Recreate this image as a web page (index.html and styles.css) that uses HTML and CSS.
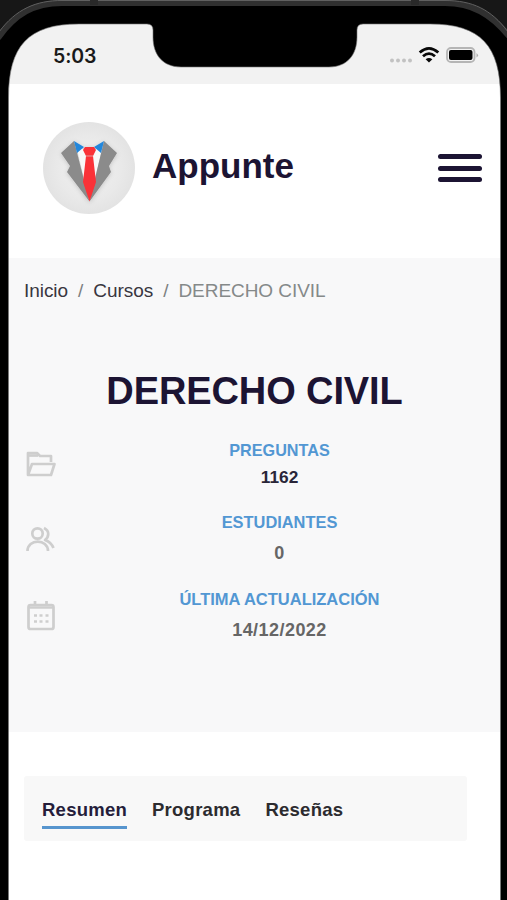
FILE: index.html
```html
<!DOCTYPE html>
<html lang="es">
<head>
<meta charset="utf-8">
<title>Derecho Civil</title>
<link rel="stylesheet" href="styles.css">
</head>
<body>
<div class="phone">
  <main class="screen">
    <div class="status">
      <span class="time">5:03</span>
      <svg class="signals" viewBox="0 0 90 20" width="90" height="20">
        <g fill="#c2c2c2"><circle cx="3" cy="14.500" r="2"/><circle cx="9" cy="14.500" r="2"/><circle cx="15" cy="14.500" r="2"/><circle cx="21" cy="14.500" r="2"/></g>
        <g fill="none" stroke="#080808" stroke-width="2.800"><path d="M30.700 6.500Q40 -1.800 49.300 6.500"/><path d="M34 10.300Q40 4.900 46 10.300"/></g>
        <path d="M36.600 13.300Q40 10.500 43.400 13.300L40 16.500Z" fill="#080808"/>
        <rect x="58" y="2" width="27.500" height="14" rx="4" fill="#f2f2f2" stroke="#b5b5b5" stroke-width="1.800"/>
        <rect x="60" y="4" width="23.500" height="10" rx="2" fill="#000"/>
        <path d="M87.500 7q3 2.300 0 4.600z" fill="#adadad"/>
      </svg>
    </div>
    <header class="header">
      <svg class="logo" viewBox="0 0 92 92" width="92" height="92">
        <defs>
          <radialGradient id="disc"><stop offset="0" stop-color="#f2f2f2"/><stop offset=".7" stop-color="#e9e9e9"/><stop offset="1" stop-color="#e3e3e3"/></radialGradient>
          <filter id="shade" x="-30%" y="-30%" width="160%" height="160%"><feDropShadow dx="0" dy="1" stdDeviation="2" flood-opacity=".18"/></filter>
        </defs>
        <circle cx="46" cy="46" r="46" fill="url(#disc)"/>
        <g filter="url(#shade)">
          <path d="M34 27H59L46.500 79Z" fill="#f8f8f8"/>
          <path d="M31 19L18 31L27 44L24 50L46.500 79.500Z" fill="#8b8b8b"/>
          <path d="M61 19L74 31L66 44L68 50L46.500 79.500Z" fill="#8b8b8b"/>
          <path d="M31 19L41 25L34 31ZM61 19L51 25L58 31Z" fill="#2487dc"/>
          <path d="M42 25H51L53 28L50 34L53 60L46.500 79.500L40 60L43 34L40 28Z" fill="#fa3038"/>
          <path d="M43 34H50" stroke="#e39a9d" stroke-width="1"/>
        </g>
      </svg>
      <span class="brand">Appunte</span>
      <div class="menu"><i></i><i></i><i></i></div>
    </header>
    <section class="hero">
      <nav class="crumbs"><span>Inicio</span><b>/</b><span>Cursos</span><b>/</b><em>DERECHO CIVIL</em></nav>
      <h1>DERECHO CIVIL</h1>
      <div class="stat questions">
        <svg viewBox="0 0 32 32" width="32" height="32"><path d="M4 27V5H13L16 8H27V14M4 27L8 16H30.500L27 27Z"/><path d="M4 7.500H14"/></svg>
        <div><h2>PREGUNTAS</h2><p>1162</p></div>
      </div>
      <div class="stat students">
        <svg viewBox="0 0 32 32" width="32" height="32"><circle cx="13.500" cy="10.500" r="5.200"/><path d="M3.500 28C3.500 15.500 24 15.500 24 28M20 5C26 8 25 14 21 17Q27 19 29.500 25"/></svg>
        <div><h2>ESTUDIANTES</h2><p>0</p></div>
      </div>
      <div class="stat updated">
        <svg viewBox="0 0 32 32" width="32" height="32"><rect x="4.500" y="5" width="25" height="24" rx="2"/><path d="M4.500 7.500H29.500M11 1V6M22.500 1V6"/><path d="M10 15.500h3M15.500 15.500h3M21.500 15.500h3M10 21.500h3M15.500 21.500h3M21.500 21.500h3"/></svg>
        <div><h2>ÚLTIMA ACTUALIZACIÓN</h2><p>14/12/2022</p></div>
      </div>
    </section>
    <nav class="tabs"><span class="active">Resumen</span><span>Programa</span><span>Reseñas</span></nav>
  </main>
  <svg class="frame" viewBox="0 0 507 900" width="507" height="900">
    <path d="M0 0H507V900H500.500V98C500.500 46 481 24 430 24H363Q357 24 357 30V37C357 55 347 67 329 67H181C163 67 153 55 153 37V30Q153 24 147 24H79C28 24 8.500 46 8.500 98V900H0Z" fill="#000"/>
    <path d="M0 0H507V36C490 15 472 3.500 445 3.500H60C34 3.500 16 15 0 37Z" fill="#171717"/>
    <path d="M-2 38C15 14 34 3 62 3H445C472 3 491 14 509 36" fill="none" stroke="#303030" stroke-width="6"/>
    <path d="M-1 32C16 9 36 .5 62 .5H445C472 .5 491 9 508 32" fill="none" stroke="#606060" stroke-width="1"/>
    <path d="M90 0h8v5h-8zM411 0h8v5h-8z" fill="#292929"/>
    <path d="M8.500 900V98C8.500 46 28 24 79 24H147Q153 24 153 30V37C153 55 163 67 181 67H329C347 67 357 55 357 37V30Q357 24 363 24H430C481 24 500.500 46 500.500 98V900" fill="none" stroke="#777" stroke-width=".6"/>
  </svg>
</div>
</body>
</html>
```
FILE: styles.css
```css
* { box-sizing: border-box; }
body { margin: 0; background: #000; font-family: "Liberation Sans", Arial, sans-serif; color: #1c1433; }
.phone { position: relative; width: 507px; height: 900px; overflow: hidden; }
.screen { margin: 24px 6px 0 8px; height: 876px; background: #fff; }
.frame { position: absolute; inset: 0; pointer-events: none; }
.status { height: 60px; background: #f2f2f2; display: flex; justify-content: space-between; padding: 20px 22px 0 45px; }
.time { font: 600 19.500px/24px Inter, sans-serif; color: #1a1a1a; letter-spacing: -.1px; }
.signals { margin-top: 2px; }
.header { height: 174px; display: flex; align-items: center; padding: 0 19px 6px 35px; }
.brand { margin: -4px 0 0 17px; font-size: 35px; font-weight: bold; line-height: 40px; }
.menu { margin-left: auto; width: 44px; display: grid; gap: 6.500px; }
.menu i { height: 5px; border-radius: 3px; background: #1c1433; }
.hero { height: 474px; background: #f8f8f9; padding: 21px 16px 0; }
.crumbs { display: flex; font-size: 19px; line-height: 24px; color: #39363f; letter-spacing: -.05px; }
.crumbs b { font-weight: normal; color: #7c7f80; margin: 0 10px; }
.crumbs em { font-style: normal; color: #858989; }
h1 { margin: 64px 0 0; font-size: 38px; line-height: 48px; text-align: center; letter-spacing: -.1px; }
.stat { display: flex; }
.stat svg { flex: none; fill: none; stroke: #cecece; stroke-width: 2.700; stroke-linejoin: round; }
.stat > div { flex: 1; text-align: center; padding-left: 18px; }
h2 { margin: 0; color: #5297d3; font-size: 16.200px; line-height: 20px; }
.stat p { margin: 9px 0 0; color: #666; font-size: 18px; font-weight: bold; line-height: 24px; letter-spacing: .45px; }
.questions { margin-top: 25px; }
.questions svg { margin-top: 8px; }
.stat.questions p { margin-top: 5px; color: #292538; font-size: 17.300px; letter-spacing: 0; }
.students { margin-top: 23px; }
.students svg { margin-top: 11px; }
.students h2 { font-size: 16.400px; }
.updated { margin-top: 24px; }
.updated svg { margin-top: 11px; }
.updated h2 { font-size: 16.500px; }
.tabs { width: 443px; height: 65px; margin: 44px 0 0 16px; border-radius: 3px; background: #f8f8f8; display: flex; gap: 25px; padding: 20px 18px; color: #2c2b2f; font-size: 18.500px; font-weight: bold; line-height: 28px; letter-spacing: .25px; }
.tabs span { height: 33px; }
.tabs .active { color: #251d3b; border-bottom: 3px solid #5795ce; }
```
